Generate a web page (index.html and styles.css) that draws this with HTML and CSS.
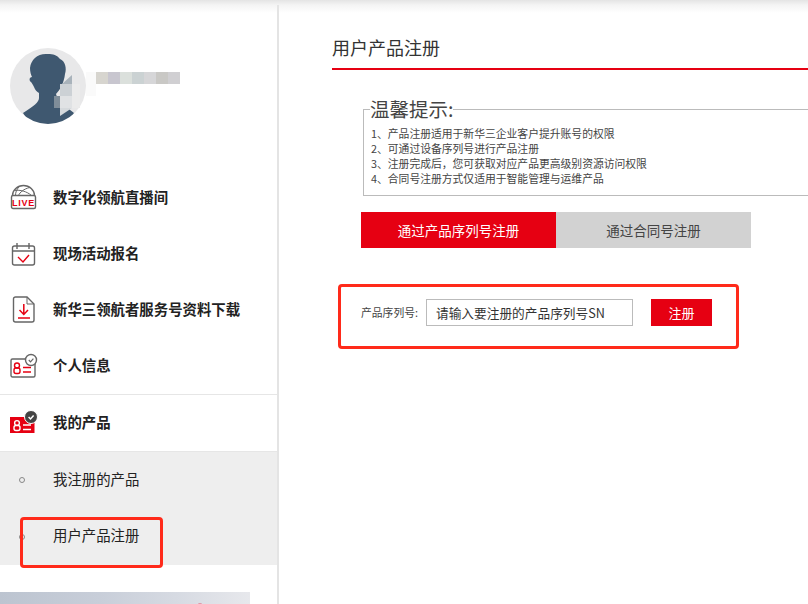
FILE: index.html
```html
<!DOCTYPE html>
<html lang="zh">
<head>
  <meta charset="UTF-8" />
  <title>用户产品注册</title>
  <link rel="stylesheet" href="styles.css">
</head>
<body>

<div class="page">
  <div class="top-gap"></div>
  <div class="layout">

    <aside class="sidebar">
      <div class="profile">
        <svg class="avatar" width="76" height="76" viewBox="0 0 76 76">
          <defs><clipPath id="avatarClip"><circle cx="38" cy="38" r="38"/></clipPath></defs>
          <circle cx="38" cy="38" r="38" fill="#e8e8e9"/>
          <path clip-path="url(#avatarClip)" fill="#3f5870" d="M38 6C28 5 21 11 20 20C20 24 21 27 22 29C19 29 19 33 21 34C22 35 23 37 24 39C25 42 27 44 29 45L29 50C29 54 24 58 13 65L20 76H58L64 65C58 60 52 57 48 52L46 46C50 42 54 35 55 26C57 20 55 13 50 11C47 7 43 6 38 6Z"/>
          <polygon points="62,27 62,36 52,36" fill="#a9b3bb"/>
          <rect x="50" y="36" width="12" height="12" fill="#ccd1d5"/>
          <rect x="44" y="48" width="6" height="12" fill="#7f8d99"/>
          <rect x="50" y="48" width="12" height="12" fill="#e0e2e4"/>
          <polygon points="50,60 62,60 50,68" fill="#d5d9dc"/>
          <rect x="62" y="36" width="8" height="24" fill="#ebebeb"/>
        </svg>
        <svg class="name-mosaic" width="94" height="24" viewBox="0 0 94 24">
          <rect x="0" y="0" width="10" height="24" fill="#fafafa"/>
          <rect x="10" y="0" width="12" height="12" fill="#d7d5cf"/>
          <rect x="22" y="0" width="12" height="12" fill="#c8c6cf"/>
          <rect x="34" y="0" width="12" height="12" fill="#dbe0dc"/>
          <rect x="46" y="0" width="12" height="12" fill="#cbd2d3"/>
          <rect x="58" y="0" width="12" height="12" fill="#d6d6d8"/>
          <rect x="70" y="0" width="12" height="12" fill="#c9c8c5"/>
          <rect x="82" y="0" width="12" height="12" fill="#d0cfd2"/>
        </svg>
      </div>

      <nav class="menu">
        <a class="menu-item">
          <svg class="menu-icon" width="28" height="28" viewBox="0 0 28 28" fill="none" stroke="#666" stroke-width="1.4">
            <path d="M2.5 11.5A11 10 0 0 1 24.5 11.5"/>
            <path d="M4.5 6.5C10 5.5 17 7.5 21.5 11.5M19.5 3.5C14 5 10 8 8.5 11.5M9 3C6.5 5.5 5.5 8.5 5.5 11.5" stroke-width="1"/>
            <rect x="1.5" y="11.5" width="24" height="13" rx="1.5"/>
            <text class="live-text" x="13.5" y="22" text-anchor="middle">LIVE</text>
          </svg>
          <span class="label">数字化领航直播间</span>
        </a>
        <a class="menu-item">
          <svg class="menu-icon" width="28" height="28" viewBox="0 0 28 28" fill="none" stroke="#666" stroke-width="1.4">
            <rect x="2.5" y="6" width="22" height="19" rx="2"/>
            <path d="M7 3V9M19 3V9M2.5 11H24.5"/>
            <path d="M8 17L13 22L19 15" stroke="#e60012"/>
          </svg>
          <span class="label">现场活动报名</span>
        </a>
        <a class="menu-item">
          <svg class="menu-icon" width="28" height="28" viewBox="0 0 28 28" fill="none" stroke="#666" stroke-width="1.4">
            <path d="M5.5 1H17L24 8V24A2 2 0 0 1 22 26H5.5A2 2 0 0 1 3.5 24V3A2 2 0 0 1 5.5 1Z"/>
            <path d="M17 1V8H24" stroke-width="1"/>
            <path d="M13.8 8V18M9.5 14L13.8 18.5L18 14M8 22H20" stroke="#e60012" stroke-width="1.5"/>
          </svg>
          <span class="label">新华三领航者服务号资料下载</span>
        </a>
        <a class="menu-item">
          <svg class="menu-icon" width="28" height="28" viewBox="0 0 28 28" fill="none" stroke="#666" stroke-width="1.4">
            <rect x="1" y="7" width="24" height="18" rx="1.5"/>
            <circle cx="21" cy="8" r="5.5" fill="#fff"/>
            <path d="M18.8 8L20.5 9.8L23.4 6.6" stroke-width="1.2"/>
            <circle cx="7" cy="13.5" r="2.5" stroke="#e60012"/>
            <rect x="4" y="16" width="6" height="5.5" rx="2" stroke="#e60012"/>
            <path d="M13 15.5H21M13 20H21" stroke="#e60012"/>
          </svg>
          <span class="label">个人信息</span>
        </a>
        <a class="menu-item menu-item-active">
          <svg class="menu-icon" width="28" height="28" viewBox="0 0 28 28" fill="none" stroke="#fff" stroke-width="1.4">
            <rect x="0" y="8" width="24.5" height="16" fill="#e60012" stroke="none"/>
            <circle cx="21" cy="8" r="6.5" fill="#444" stroke="#fff" stroke-width="1"/>
            <path d="M18.6 8L20.5 10L23.6 6.6" stroke-width="1.5"/>
            <circle cx="7" cy="14" r="2.4"/>
            <rect x="4" y="16.5" width="6" height="5" rx="2"/>
            <path d="M13 16H21M13 20.5H21"/>
          </svg>
          <span class="label">我的产品</span>
        </a>
      </nav>

      <ul class="submenu">
        <li><i class="bullet"></i><span class="label">我注册的产品</span></li>
        <li><i class="bullet"></i><span class="label">用户产品注册</span></li>
      </ul>

      <div class="banner"></div>
    </aside>

    <main class="content">
      <h1 class="page-title">用户产品注册</h1>

      <fieldset class="tips">
        <legend>温馨提示:</legend>
        <p>1、产品注册适用于新华三企业客户提升账号的权限</p>
        <p>2、可通过设备序列号进行产品注册</p>
        <p>3、注册完成后&#xFF0C;您可获取对应产品更高级别资源访问权限</p>
        <p>4、合同号注册方式仅适用于智能管理与运维产品</p>
      </fieldset>

      <div class="tabs">
        <div class="tab tab-active">通过产品序列号注册</div>
        <div class="tab">通过合同号注册</div>
      </div>

      <form class="sn-form">
        <label class="sn-label" for="sn">产品序列号:</label>
        <input id="sn" class="sn-input" type="text" placeholder="请输入要注册的产品序列号SN" />
        <button class="sn-submit" type="button">注册</button>
      </form>
    </main>

  </div>

  <div class="mark mark-menu"></div>
  <div class="mark mark-form"></div>
</div>

</body>
</html>
```

FILE: styles.css
```css
html, body {
  margin: 0;
  padding: 0;
  background: #fff;
}
body {
  font-family: "Noto Sans CJK SC", "Liberation Sans", sans-serif;
  color: #333;
}
.page {
  position: relative;
  width: 808px;
  height: 604px;
  overflow: hidden;
  background: linear-gradient(#e4e4e4 0, #f4f4f4 5px, #fff 13px);
}
.top-gap {
  height: 5px;
}
.layout {
  display: flex;
  height: 599px;
}

/* sidebar */
.sidebar {
  width: 277px;
  flex: none;
  border-right: 2px solid #e4e4e4;
}
.profile {
  display: flex;
  align-items: flex-start;
  height: 165px;
  padding: 43px 0 0 10px;
  box-sizing: border-box;
}
.name-mosaic {
  margin-top: 24px;
}
.menu-item {
  display: flex;
  align-items: center;
  gap: 15px;
  height: 56px;
  padding-left: 10px;
  font-size: 14.4px;
  font-weight: 700;
  color: #222;
}
.menu-item-active {
  border-top: 1px solid #e6e6e6;
}
.menu-icon {
  flex: none;
}
.label {
  margin-top: -4px;
}
.live-text {
  font-family: "Liberation Sans", sans-serif;
  font-size: 9px;
  font-weight: 700;
  letter-spacing: 0.8px;
  fill: #e60012;
  stroke: none;
}
.submenu {
  margin: 0;
  padding: 0;
  list-style: none;
  background: #eee;
  border-top: 1px solid #e6e6e6;
}
.submenu li {
  display: flex;
  align-items: center;
  height: 57px;
  padding-left: 19px;
  font-size: 14.4px;
  color: #222;
}
.submenu li:first-child {
  height: 56px;
}
.bullet {
  width: 6px;
  height: 6px;
  margin-right: 28px;
  border: 1px solid #888;
  border-radius: 50%;
  box-sizing: border-box;
}
.banner {
  width: 250px;
  height: 40px;
  margin-top: 27px;
  background:
    radial-gradient(circle at 200px 17px, #e0506a 0, #e0506a 5px, transparent 6px),
    linear-gradient(90deg, #bcc4d0 0, #c8ced9 40%, #d6dae2 70%, #e7e8ec 100%);
}

/* main */
.content {
  flex: 1;
  min-width: 0;
  padding: 30px 0 0 53px;
  overflow: hidden;
}
.page-title {
  margin: 0 0 26px;
  padding-bottom: 9px;
  border-bottom: 2px solid #e60012;
  font-size: 18px;
  line-height: 24px;
  font-weight: 400;
}
.tips {
  width: 480px;
  height: 98px;
  margin: 0 0 16px 31px;
  padding: 0 0 0 7px;
  border: 1px solid #bbb;
  box-sizing: content-box;
}
.tips legend {
  margin-left: -1px;
  padding: 0;
  font-size: 19.5px;
  line-height: 26px;
  color: #444;
}
.tips p {
  margin: 0;
  font-size: 10.8px;
  line-height: 15px;
  color: #444;
}
.tips legend + p {
  margin-top: 4px;
}
.tabs {
  display: flex;
  margin: 0 0 51px 29px;
}
.tab {
  width: 195px;
  height: 36px;
  line-height: 36px;
  text-align: center;
  font-size: 13.5px;
  background: #d2d2d2;
  color: #444;
}
.tab-active {
  background: #e60012;
  color: #fff;
}
.sn-form {
  display: flex;
  align-items: center;
  margin-left: 29px;
}
.sn-label {
  width: 65px;
  margin-top: -2px;
  font-size: 10.8px;
  color: #444;
}
.sn-input {
  width: 207px;
  height: 27px;
  padding: 0 9px;
  border: 1px solid #bbb;
  box-sizing: border-box;
  font-family: inherit;
  font-size: 12.7px;
  outline: none;
}
.sn-input::placeholder {
  color: #333;
  opacity: 1;
}
.sn-submit {
  width: 61px;
  height: 27px;
  margin-left: 18px;
  padding: 0;
  border: none;
  background: #e60012;
  color: #fff;
  font-family: inherit;
  font-size: 13px;
}

/* red annotation boxes drawn over the screenshot */
.mark {
  position: absolute;
  border: 3px solid #ff2a1a;
  border-radius: 4px;
  box-sizing: border-box;
}
.mark-menu {
  left: 20px;
  top: 517px;
  width: 143px;
  height: 51px;
}
.mark-form {
  left: 338px;
  top: 284px;
  width: 401px;
  height: 65px;
}
```
